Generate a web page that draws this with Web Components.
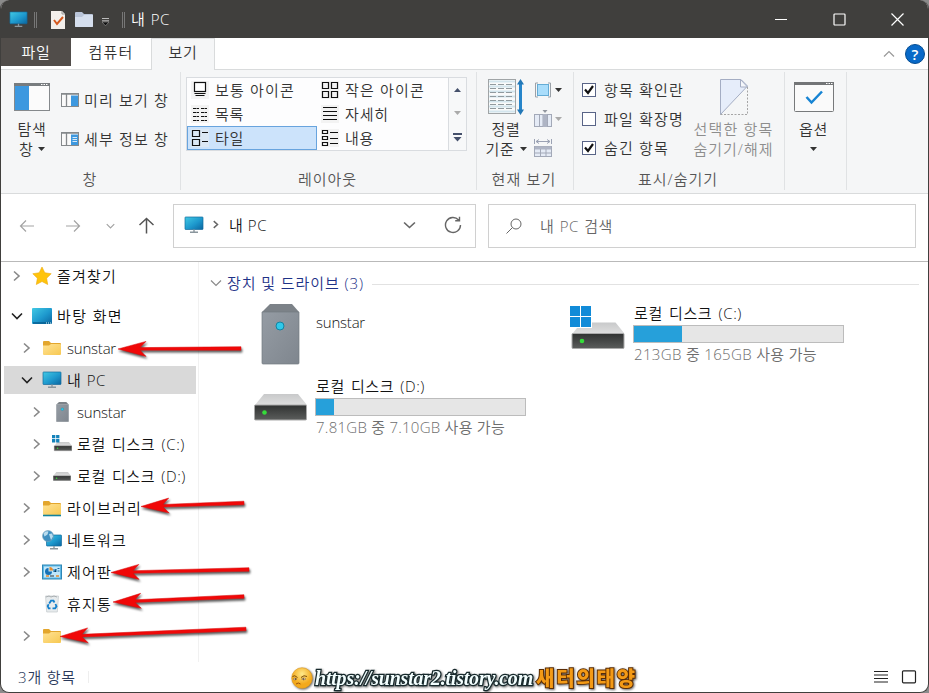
<!DOCTYPE html>
<html lang="ko">
<head>
<meta charset="utf-8">
<title>내 PC</title>
<style>
    body {
        margin: 0;
        overflow: hidden;
        background: #8b8b8b;
        font: 350 15px/20px "Open Sans", "Noto Sans CJK KR DemiLight", "Noto Sans CJK KR", sans-serif;
        color: #111;
    }
</style>
</head>
<body>
<explorer-window></explorer-window>

<script>
const monitor = (x, y, w, h) => `
    <rect x="${x}" y="${y}" width="${w}" height="${h}" rx=".6" fill="url(#m)" stroke="#126a9c" stroke-width=".7"/>
    <path d="M${x + w / 2} ${y + h}v2.5M${x + w / 2 - 4} ${y + h + 2.8}h8" stroke="#8a969d" stroke-width="1.4"/>`;

const folder = `
    <path d="M1 3q0-1 1-1h5l2 2h9q1 0 1 1v3H1z" fill="#e3a62d"/>
    <path d="M1 6.5h6l2-1.5h9q1 0 1 1v9q0 1-1 1H2q-1 0-1-1z" fill="url(#f)"/>`;

const drive = `
    <path d="M10 0h34l9 11H1z" fill="url(#dt)"/>
    <rect x=".5" y="11" width="52" height="15" rx="1" fill="url(#db)" stroke="#aaa" stroke-width="1"/>
    <circle cx="10.500" cy="18.500" r="2.300" fill="#35dc3a"/>`;

const winLogo = `<path d="M0 0h10v10H0zM11 0h10v10H11zM0 11h10v10H0zM11 11h10v10H11z" fill="#118bd8"/>`;

const tower = `
    <path d="M9 0h22l7 8H1z" fill="#7c8288"/>
    <path d="M1 8h37v51q0 1-1 1H2q-1 0-1-1z" fill="url(#t)" stroke="#747b82" stroke-width=".7"/>
    <circle cx="19" cy="22" r="4" fill="#2fc9ea" stroke="#1583a0"/>`;

// name: [viewBox width, viewBox height, markup]
const ICONS = {
    monitor: [20, 18, monitor(1, 1, 18, 12.5)],
    desktop: [20, 18, `<rect width="20" height="16" y="1" rx="1" fill="url(#m)"/><path d="M1 16h18" stroke="#075f91" stroke-width="1.500"/><path d="M14 16h1m1 0h1m1 0h1" stroke="#dff"/>`],
    folder: [20, 18, folder],
    library: [20, 18, folder + '<path d="M1 16.500h18" stroke="#12829d" stroke-width="1.600"/>'],
    star: [20, 20, '<path d="M10 1l2.800 5.800 6.400.9-4.600 4.500 1.100 6.300L10 15.500l-5.700 3 1.100-6.300L.8 7.700l6.400-.9z" fill="#ffc40c" stroke="#ecaa0c" stroke-width=".6"/>'],
    tower: [39, 61, tower],
    drive: [53, 27, drive],
    windrive: [55, 44, `<g transform="translate(1.500 16.500)">${drive}</g><path d="M0 0h22v22H0z" fill="#fff"/>${winLogo}`],
    miniwindrive: [20, 18, `<g transform="translate(2 7) scale(.34)">${drive}</g><path d="M0 0h8v7H0z" fill="#fff"/><path d="M0 0h3.300v3.300H0zM4.100 0h3.300v3.300H4.100zM0 4.100h3.300v3.300H0zM4.100 4.100h3.300v3.300H4.100z" fill="#1482ba"/>`],
    network: [20, 20, monitor(4.5, 5, 15, 11) + `<circle cx="6" cy="6" r="5.500" fill="#3f8fc0" stroke="#7ea5bb" stroke-width=".6"/><path d="M1.500 3.500q2-3 5-2l-1 3-3 2zM7 4l3-.5 1 3-2 3.500-1-3z" fill="#b9dcee"/>`],
    control: [20, 18, `<rect x=".5" y="2" width="19" height="14" fill="#5db8e6" stroke="#2f87b6"/><rect x="2" y="3.500" width="16" height="11" fill="#bfe6fa"/><path d="M6.500 5a3.500 3.500 0 1 0 3.500 3.500H6.500z" fill="#1671b6"/><path d="M7.500 4v3.500H11A3.500 3.500 0 0 0 7.500 4" fill="#e78b2d"/><path d="M12 9v-3M12 9l2-3v3M15.500 5.500h2M15.500 8h2" stroke="#176ba4"/><path d="M4 13h3m7 0h3" stroke="#e78b2d" stroke-width="1.300"/><path d="M8 13h4" stroke="#333"/>`],
    trash: [20, 20, `<path d="M3.500 2h13l-1.200 16H4.700z" fill="#e7ebed" stroke="#c3c9cc" stroke-width=".7"/><path d="M4 3l3-1 2 1 3-1 3 1" stroke="#a9afb2" fill="none"/><path d="M7.200 9.500L9 6.700h2.500l1 1.800M13.500 10l1 2.300-1.300 2h-2.700M8.500 14.300H6.700L5.700 12l1-1.700" fill="none" stroke="#1480cc" stroke-width="1.800"/>`],

    doc: [14, 18, '<path d="M0 0h11l3 3v15H0z" fill="#f3efeb"/><path d="M11 0v3h3" fill="none" stroke="#999"/><path d="M3 9l3 4 6-7" fill="none" stroke="#d65a1f" stroke-width="2"/>'],
    whitefolder: [18, 15, '<path d="M0 1q0-1 1-1h6l2 2h8q1 0 1 1v11q0 1-1 1H1q-1 0-1-1z" fill="#b9c4d8"/><path d="M0 5h7l2-2h9v11q0 1-1 1H1q-1 0-1-1z" fill="#d5deed"/>'],
    qat: [7, 8, '<path d="M0 .5h7M0 2.800h7" stroke="#bbb"/><path d="M0 4h7L3.500 7.800z" fill="#111" stroke="#aaa" stroke-width=".5"/>'],
    min: [13, 13, '<path d="M0 6.500h12" stroke="#fff" stroke-width="1.200"/>'],
    max: [13, 13, '<rect x="1" y="1" width="11" height="11" rx=".8" fill="none" stroke="#fff" stroke-width="1.200"/>'],
    close: [13, 13, '<path d="M.5.5l12 12m0-12l-12 12" stroke="#fff" stroke-width="1.200"/>'],
    help: [20, 20, '<circle cx="10" cy="10" r="9.500" fill="#0869c8" stroke="#064d91"/>'],

    right: [8, 12, '<path d="M1 1.500L6 6l-5 4.500" class="l"/>'],
    down: [12, 8, '<path d="M1 1.500L6 6.500l5-5" class="l"/>'],
    up: [12, 8, '<path d="M1 6.500L6 1.500l5 5" class="l"/>'],
    back: [16, 16, '<path d="M15 8H1.500M7 2.500L1.500 8 7 13.500" class="l"/>'],
    forward: [16, 16, '<path d="M1 8h13.500M9 2.500L14.500 8 9 13.500" class="l"/>'],
    upward: [17, 17, '<path d="M8.500 16.500V1.500M1.500 8l7-6.500 7 6.500" class="l"/>'],
    refresh: [18, 18, '<path d="M14.600 4A7.500 7.500 0 1 0 16.500 9M15.500.8v4h-4.300" class="l"/>'],
    search: [16, 16, '<circle cx="10" cy="6" r="5" class="l"/><path d="M6.500 9.500L.5 15.500" class="l"/>'],
    caret: [7, 4, '<path d="M0 0h7L3.500 4z" fill="currentColor"/>'],
    caretup: [7, 4, '<path d="M0 4h7L3.500 0z" fill="currentColor"/>'],
    more: [9, 9, '<path d="M0 1h9" stroke="currentColor" stroke-width="2"/><path d="M.5 4h8l-4 4.500z" fill="currentColor"/>'],

    navpane: [36, 28, '<rect x=".5" y=".5" width="35" height="27" fill="#fbfbfb" stroke="#85898c"/><path d="M0 1.500h36" stroke="#787c7f" stroke-width="3"/><path d="M1 3h14v24H1z" fill="#3d98df"/><path d="M27 1.500h1.500m1 0H31m1 0h1.500" stroke="#fff"/>'],
    preview: [18, 14, '<rect x=".5" y=".5" width="17" height="13" fill="#fafafa" stroke="#85898c"/><path d="M0 1h18M5.500 1v12" stroke="#85898c" fill="none" stroke-width="1.300"/><path d="M10 2.500h7V13h-7z" fill="#3d98df"/>'],
    details: [18, 14, '<rect x=".5" y=".5" width="17" height="13" fill="#fafafa" stroke="#85898c"/><path d="M0 1h18M5.500 1v12" stroke="#85898c" fill="none" stroke-width="1.300"/><path d="M10 2.500h7V13h-7z" fill="#3d98df"/><path d="M11.500 5.500h4.500m-4.500 2h4.500m-4.500 2h4.500" stroke="#fff" stroke-width=".8"/>'],

    medium: [18, 18, '<rect x="3.500" y="1.500" width="11" height="9" class="k"/><path d="M3.500 12.500h11M4.500 14.500h9" class="k"/>'],
    small: [18, 18, '<path d="M1.500 1.500h6v6h-6zM10.500 1.500h6v6h-6zM1.500 10.500h6v6h-6zM10.500 10.500h6v6h-6z" class="k"/>'],
    list: [18, 18, '<path d="M2 3.500h6m2 0h6M2 7.500h6m2 0h6M2 11.500h6m2 0h6M2 15.500h6m2 0h6" class="k" stroke-dasharray="3.500 .5 2 0"/>'],
    lines: [18, 18, '<path d="M2 2.500h14M2 6.500h14M2 10.500h14M2 14.500h14" class="k"/>'],
    tiles: [18, 18, '<path d="M1.500 1.500h7v6h-7zM1.500 10.500h7v6h-7zM11 3.500h6M11 12.500h6" class="k"/>'],
    content: [18, 18, '<path d="M1.500 1.500h5v3h-5zM1.500 7.500h5v3h-5zM1.500 13.500h5v3h-5zM9 3.500h8M9 9.500h8M9 14.500h8" class="k"/>'],

    sort: [36, 36, '<rect x=".5" y=".5" width="27" height="34" fill="#fafafa" stroke="#a0a4a6"/><path d="M1 2.500h26M1 7.500h26M1 12.500h26M1 17.500h26M1 22.500h26M1 27.500h26M1 32.500h26" stroke="#d3e5ed" stroke-width="2"/><path d="M2 5.500h24M2 9.500h24M2 13.500h24M2 17.500h24M2 21.500h24M2 25.500h24M2 29.500h24" stroke="#919a9e" stroke-dasharray="6 2"/><path d="M32.500 4v28" stroke="#2685ca" stroke-width="3"/><path d="M29 5.500L32.500 0 36 5.500zM29 30.500l3.500 5.500 3.500-5.500z" fill="#2378b7"/>'],
    group: [18, 18, '<path d="M4 2H1.500v14H4M14 2h2.500v14H14" fill="none" stroke="#9ba1a8"/><rect x="3.500" y="3.500" width="11" height="11" fill="#a9ddfb" stroke="#65acd5"/>'],
    addcol: [18, 18, '<rect x=".5" y="4.500" width="17" height="12" fill="#e5ebf6" stroke="#a3a9b8"/><path d="M5.500 4v13M9 4v13M13.500 4v13" stroke="#a3a9b8"/><path d="M9 4h4v13H9z" fill="#aeb4c4"/><path d="M8.500 0h5L11 3z" fill="#91969f"/>'],
    fitcol: [18, 19, '<path d="M.5 0v5M17.500 0v5M2 2.500h14M5 .5l-3 2 3 2M13 .5l3 2-3 2" fill="none" stroke="#9ba2b4"/><rect x=".5" y="7.500" width="17" height="10" fill="#e5ebf6" stroke="#a3a9b8"/><path d="M1 9h16" stroke="#aeb4c4" stroke-width="3"/><path d="M1 14h16M6.500 10v8M12 10v8" stroke="#a3a9b8"/>'],
    hide: [28, 36, '<path d="M.5 35.500V.5H21L27.500 7z" fill="#e6edfa" stroke="#a4adc3"/><path d="M20.500.5V8h7z" fill="#f5f7fb" stroke="#a4adc3"/><path d="M27.500 8v27.500H.5" fill="none" stroke="#a5a5a5" stroke-dasharray="2 1.500"/>'],
    options: [40, 30, '<rect x=".5" y=".5" width="39" height="29" rx="1" fill="#fafafa" stroke="#77797b"/><path d="M0 1.500h40" stroke="#737577" stroke-width="3"/><path d="M32 1.500h1.500m1 0H36m1 0h1.500" stroke="#fff"/><path d="M12.500 15l5 5.500L28 9.500" fill="none" stroke="#1784d3" stroke-width="2.500"/>'],
    tick: [14, 14, '<path d="M3 6.500L6 10l5-7" fill="none" stroke="#111" stroke-width="2.200"/>'],
    viewlist: [16, 14, '<path d="M1 1.500h14M1 5h14M1 8.500h14M1 12h14" stroke="#222" stroke-width="1.200"/>'],
    viewtile: [16, 14, '<rect x="1.500" y=".8" width="13" height="12" rx="1" fill="none" stroke="#222" stroke-width="1.200"/>'],
    face: [22, 22, '<circle cx="11" cy="11" r="10.300" fill="url(#s)" stroke="#e09a1c" stroke-width=".6"/><path d="M1.500 9.500q2-2 5 1M10 10.500q3-3 6-1" stroke="#7c4c09" fill="none"/><path d="M2 12q2-2 4 0-2 2-4 0M10.500 12q2.500-2.500 4.500 0-2.500 2-4.500 0" fill="#fff" stroke="#7c4c09" stroke-width=".5"/><circle cx="4.500" cy="12" r=".8" fill="#442806"/><circle cx="12.500" cy="12" r=".8" fill="#442806"/><path d="M5 17q2.500-2 4.500 0" stroke="#9c540e" fill="none"/>'],
};

const DEFS = `<defs>
    <linearGradient id="m" x2="1" y2="1"><stop stop-color="#42c9e4"/><stop offset=".55" stop-color="#1d98cd"/><stop offset="1" stop-color="#0b659f"/></linearGradient>
    <linearGradient id="f" x2="1" y2="1"><stop stop-color="#ffe294"/><stop offset="1" stop-color="#f7c851"/></linearGradient>
    <linearGradient id="dt" x2="0" y2="1"><stop stop-color="#c8c9ca"/><stop offset="1" stop-color="#dedede"/></linearGradient>
    <linearGradient id="db" x2="0" y2="1"><stop stop-color="#303231"/><stop offset="1" stop-color="#5b5d5c"/></linearGradient>
    <linearGradient id="t" x2="1" y2="1"><stop stop-color="#959ca4"/><stop offset="1" stop-color="#7f868e"/></linearGradient>
    <radialGradient id="s" cx=".5" cy=".3"><stop stop-color="#ffe98a"/><stop offset="1" stop-color="#f3a91b"/></radialGradient>
</defs>`;

class WinIcon extends HTMLElement {
    constructor() {
        super();
        this.attachShadow({ mode: 'open' });
    }

    connectedCallback() {
        const [w, h, body] = ICONS[this.getAttribute('name')];
        const width = this.getAttribute('w') || w;
        const height = this.getAttribute('h') || h;
        this.shadowRoot.innerHTML = `
            <style>
                :host { display: block; flex: none; width: ${width}px; height: ${height}px; }
                svg { display: block; }
                .l { fill: none; stroke: currentColor; stroke-width: var(--stroke, 1.2); }
                .k { fill: none; stroke: #111; stroke-width: 1.2; }
                rect.k { fill: #fff; }
            </style>
            <svg width="${width}" height="${height}" viewBox="0 0 ${w} ${h}" preserveAspectRatio="none">${DEFS}${body}</svg>
        `;
    }
}
customElements.define('win-icon', WinIcon);

// Text run tracked so that it fills the width given in "w".
// Runs with latin letters keep a tight tracking, the rest goes into the spaces.
class FitText extends HTMLElement {
    constructor() {
        super();
        this.attachShadow({ mode: 'open' });
        this.shadowRoot.innerHTML = `
            <style>
                :host { display: block; flex: none; white-space: nowrap; }
                span { display: inline-block; }
            </style>
            <span><slot></slot></span>
        `;
    }

    connectedCallback() {
        const text = this.textContent;
        const target = Number(this.getAttribute('w'));
        const span = this.shadowRoot.querySelector('span');
        const extra = target - span.getBoundingClientRect().width;
        const spaces = text.split(' ').length - 1;
        let tracking = extra / text.length;
        if (spaces && /[A-Z]/.test(text)) {
            tracking = Math.min(tracking, 0.6);
            span.style.wordSpacing = `${(extra - tracking * text.length) / spaces}px`;
        }
        this.style.width = `${target}px`;
        span.style.letterSpacing = `${tracking}px`;
    }
}
customElements.define('fit-text', FitText);

class TitleBar extends HTMLElement {
    constructor() {
        super();
        this.attachShadow({ mode: 'open' });
        this.shadowRoot.innerHTML = `
            <style>
                :host { display: flex; align-items: center; height: 38px; padding-left: 8px; background: #403f3d; color: #fff; }
                i { width: 1px; height: 16px; border: 1px solid #777; border-width: 0 1px; margin-top: 2px; }
                .doc { margin: 2px 10px 0 14px; }
                .qat { margin: 5px 13px 0 9px; }
                fit-text { margin-left: 6px; }
                .buttons { display: flex; gap: 45px; margin: 0 24px 0 auto; }
            </style>
            <win-icon name="monitor" w="19" h="17"></win-icon>
            <i style="margin-left: 6px"></i>
            <win-icon class="doc" name="doc"></win-icon>
            <win-icon name="whitefolder"></win-icon>
            <win-icon class="qat" name="qat"></win-icon>
            <i></i>
            <fit-text w="39">내 PC</fit-text>
            <div class="buttons">
                <win-icon name="min"></win-icon>
                <win-icon name="max"></win-icon>
                <win-icon name="close"></win-icon>
            </div>
        `;
    }
}
customElements.define('title-bar', TitleBar);

class RibbonTabs extends HTMLElement {
    constructor() {
        super();
        this.attachShadow({ mode: 'open' });
        this.shadowRoot.innerHTML = `
            <style>
                :host { display: flex; height: 32px; background: #fff; box-shadow: inset 0 -1px #d9dbdc; color: #333; }
                .tab { display: flex; justify-content: center; box-sizing: border-box; padding-top: 4px; }
                .file { width: 70px; height: 28px; background: #514d4a; color: #fff; }
                .computer { width: 80px; }
                .view { width: 64px; background: #f5f6f7; border: 1px solid #d9dbdc; border-width: 1px 1px 0; padding-top: 3px; }
                .end { display: flex; align-items: center; gap: 10px; margin: 0 3px 0 auto; color: #999; }
                .help { display: grid; place-items: center; margin-top: -1px; font-size: 15px; font-weight: 600; color: #fff; }
                .help > * { grid-area: 1 / 1; }
            </style>
            <div class="tab file"><fit-text w="29">파일</fit-text></div>
            <div class="tab computer"><fit-text w="45">컴퓨터</fit-text></div>
            <div class="tab view"><fit-text w="29">보기</fit-text></div>
            <div class="end">
                <win-icon name="up"></win-icon>
                <div class="help"><win-icon name="help"></win-icon><span>?</span></div>
            </div>
        `;
    }
}
customElements.define('ribbon-tabs', RibbonTabs);

class RibbonGroup extends HTMLElement {
    constructor() {
        super();
        this.attachShadow({ mode: 'open' });
    }

    connectedCallback() {
        this.shadowRoot.innerHTML = `
            <style>
                :host { display: flex; flex-direction: column; box-sizing: border-box; flex: none; height: 118px; margin-top: 2px; border-right: 1px solid #e0e2e4; width: ${this.getAttribute('width')}px; }
                .body { display: flex; height: 97px; }
                .label { display: flex; justify-content: center; padding-right: 2px; color: #555; }
            </style>
            <div class="body"><slot></slot></div>
            <div class="label"><fit-text w="${this.getAttribute('lw')}">${this.getAttribute('label')}</fit-text></div>
        `;
    }
}
customElements.define('ribbon-group', RibbonGroup);

class BigButton extends HTMLElement {
    constructor() {
        super();
        this.attachShadow({ mode: 'open' });
        this.shadowRoot.innerHTML = `
            <style>
                :host { display: flex; flex-direction: column; align-items: center; }
                .icon { display: flex; height: 37px; align-items: center; margin-bottom: 4px; }
                .row { display: flex; align-items: center; gap: 5px; height: 20px; }
            </style>
            <div class="icon"><slot name="icon"></slot></div>
            <div class="row"><slot name="top"></slot></div>
            <div class="row"><slot></slot></div>
        `;
    }
}
customElements.define('big-button', BigButton);

class GalleryItem extends HTMLElement {
    constructor() {
        super();
        this.attachShadow({ mode: 'open' });
        this.shadowRoot.innerHTML = `
            <style>
                :host { display: flex; align-items: center; gap: 6px; box-sizing: border-box; height: 24px; padding-left: 3px; border: 1px solid transparent; }
                :host([selected]) { background: #cce3fb; border-color: #68a4de; }
                win-icon { background: #f3f3f3; }
                :host([selected]) win-icon { background: #dbe8f4; }
                ::slotted(fit-text) { margin-top: -1px; }
            </style>
            <win-icon name="${this.getAttribute('icon')}"></win-icon>
            <slot></slot>
        `;
    }
}
customElements.define('gallery-item', GalleryItem);

class CheckItem extends HTMLElement {
    constructor() {
        super();
        this.attachShadow({ mode: 'open' });
        this.shadowRoot.innerHTML = `
            <style>
                :host { display: flex; align-items: center; gap: 8px; height: 29px; }
                .box { box-sizing: border-box; width: 14px; height: 14px; border: 1px solid #596487; background: #fff; }
                win-icon { margin: -1px; }
            </style>
            <div class="box">${this.hasAttribute('checked') ? '<win-icon name="tick"></win-icon>' : ''}</div>
            <slot></slot>
        `;
    }
}
customElements.define('check-item', CheckItem);

class RibbonPanel extends HTMLElement {
    constructor() {
        super();
        this.attachShadow({ mode: 'open' });
        this.shadowRoot.innerHTML = `
            <style>
                :host { display: flex; box-sizing: border-box; height: 124px; background: #f5f6f7; border-bottom: 1px solid #d9dbdc; color: #333; }
                .side { display: flex; align-items: center; gap: 5px; height: 39px; }
                .gallery { display: flex; box-sizing: border-box; width: 281px; height: 74px; margin: 5px 0 0 5px; border: 1px solid #d9dce0; background: #fdfdfe; }
                .items { display: grid; grid-template: repeat(3, 24px) / 130px 131px; height: 72px; }
                .scroll { display: flex; flex-direction: column; align-items: center; justify-content: space-between; box-sizing: border-box; flex: 1; padding: 10px 0 8px; border-left: 1px solid #d9dce0; background: #f7f8f9; color: #45506b; }
                .small { display: flex; flex-direction: column; gap: 11px; margin: 9px 0 0 8px; }
                .small div { display: flex; align-items: center; gap: 3px; height: 18px; }
                .gray { color: #8d8d8d; }
                .dim { color: #aaa; }
            </style>
            <ribbon-group width="180" label="창" lw="14">
                <big-button style="margin: 6px 0 0 12px; width: 38px">
                    <win-icon slot="icon" name="navpane"></win-icon>
                    <fit-text slot="top" w="29">탐색</fit-text>
                    <fit-text w="14">창</fit-text><win-icon name="caret"></win-icon>
                </big-button>
                <div style="margin: 8px 0 0 10px">
                    <div class="side"><win-icon name="preview"></win-icon><fit-text w="85">미리 보기 창</fit-text></div>
                    <div class="side"><win-icon name="details"></win-icon><fit-text w="85">세부 정보 창</fit-text></div>
                </div>
            </ribbon-group>
            <ribbon-group width="296" label="레이아웃" lw="59">
                <div class="gallery">
                    <div class="items">
                        <gallery-item icon="medium"><fit-text w="80">보통 아이콘</fit-text></gallery-item>
                        <gallery-item icon="small"><fit-text w="80">작은 아이콘</fit-text></gallery-item>
                        <gallery-item icon="list"><fit-text w="29">목록</fit-text></gallery-item>
                        <gallery-item icon="lines"><fit-text w="44">자세히</fit-text></gallery-item>
                        <gallery-item icon="tiles" selected><fit-text w="29">타일</fit-text></gallery-item>
                        <gallery-item icon="content"><fit-text w="29">내용</fit-text></gallery-item>
                    </div>
                    <div class="scroll">
                        <win-icon name="caretup"></win-icon>
                        <win-icon class="dim" name="caret"></win-icon>
                        <win-icon name="more"></win-icon>
                    </div>
                </div>
            </ribbon-group>
            <ribbon-group width="97" label="현재 보기" lw="65">
                <big-button style="margin: 6px 0 0 9px; width: 40px">
                    <win-icon slot="icon" name="sort"></win-icon>
                    <fit-text slot="top" w="29">정렬</fit-text>
                    <fit-text w="29">기준</fit-text><win-icon name="caret"></win-icon>
                </big-button>
                <div class="small">
                    <div><win-icon name="group"></win-icon><win-icon name="caret"></win-icon></div>
                    <div class="dim"><win-icon name="addcol"></win-icon><win-icon name="caret"></win-icon></div>
                    <div><win-icon name="fitcol"></win-icon></div>
                </div>
            </ribbon-group>
            <ribbon-group width="211" label="표시/숨기기" lw="80">
                <div style="margin: 3px 0 0 8px; width: 110px">
                    <check-item checked><fit-text w="80">항목 확인란</fit-text></check-item>
                    <check-item><fit-text w="80">파일 확장명</fit-text></check-item>
                    <check-item checked><fit-text w="65">숨긴 항목</fit-text></check-item>
                </div>
                <big-button class="gray" style="margin: 6px 0 0 1px; width: 81px">
                    <win-icon slot="icon" name="hide"></win-icon>
                    <fit-text slot="top" w="80">선택한 항목</fit-text>
                    <fit-text w="80">숨기기/해제</fit-text>
                </big-button>
            </ribbon-group>
            <ribbon-group width="62" label="" lw="0">
                <big-button style="margin: 6px 0 0 8px; width: 41px">
                    <win-icon slot="icon" name="options"></win-icon>
                    <fit-text slot="top" w="29">옵션</fit-text>
                    <win-icon name="caret"></win-icon>
                </big-button>
            </ribbon-group>
        `;
    }
}
customElements.define('ribbon-panel', RibbonPanel);

class AddressBar extends HTMLElement {
    constructor() {
        super();
        this.attachShadow({ mode: 'open' });
        this.shadowRoot.innerHTML = `
            <style>
                :host { display: flex; align-items: center; box-sizing: border-box; height: 68px; padding: 0 12px 4px 18px; border-bottom: 1px solid #b9b9b9; }
                .off { color: #a3a3a3; }
                .box { display: flex; align-items: center; box-sizing: border-box; height: 44px; border: 1px solid #d0d0d0; color: #666; }
                .address { width: 303px; margin: 0 12px 0 18px; padding: 0 13px 2px 10px; }
                .address fit-text { color: #111; margin-left: 10px; }
                .search { flex: 1; padding-left: 17px; gap: 18px; }
            </style>
            <win-icon class="off" name="back"></win-icon>
            <win-icon class="off" name="forward" style="margin-left: 30px"></win-icon>
            <win-icon class="off" name="down" w="9" h="6" style="margin-left: 25px; --stroke: 1.600"></win-icon>
            <win-icon name="upward" style="margin-left: 23px; color: #555; --stroke: 1.500"></win-icon>
            <div class="box address">
                <win-icon name="monitor"></win-icon>
                <win-icon name="right" w="6" h="9" style="margin-left: 9px; --stroke: 2"></win-icon>
                <fit-text w="38">내 PC</fit-text>
                <win-icon name="down" w="13" style="margin-left: auto; --stroke: 1.500"></win-icon>
                <win-icon name="refresh" style="margin-left: 28px; --stroke: 1.400"></win-icon>
            </div>
            <div class="box search">
                <win-icon name="search" style="--stroke: 1"></win-icon>
                <fit-text w="73">내 PC 검색</fit-text>
            </div>
        `;
    }
}
customElements.define('address-bar', AddressBar);

class TreeItem extends HTMLElement {
    constructor() {
        super();
        this.attachShadow({ mode: 'open' });
    }

    connectedCallback() {
        const level = Number(this.getAttribute('level'));
        const state = this.getAttribute('state');
        this.shadowRoot.innerHTML = `
            <style>
                :host { display: flex; align-items: center; box-sizing: border-box; flex: none; height: 28px; padding-left: ${level * 10 + 7}px; }
                :host([selected]) { background: #d9d9d9; }
                .chevron { display: flex; justify-content: center; width: 12px; color: #888; --stroke: 1.6; }
                .open { color: #222; }
                .icon { display: flex; justify-content: center; width: 20px; margin: 0 5px 0 9px; }
            </style>
            <div class="chevron ${state === 'down' ? 'open' : ''}">${state ? `<win-icon name="${state}"></win-icon>` : ''}</div>
            <div class="icon"><slot name="icon"></slot></div>
            <slot></slot>
        `;
    }
}
customElements.define('tree-item', TreeItem);

class NavTree extends HTMLElement {
    constructor() {
        super();
        this.attachShadow({ mode: 'open' });
        this.shadowRoot.innerHTML = `
            <style>
                :host { display: flex; flex-direction: column; gap: 4px; flex: none; box-sizing: border-box; width: 198px; height: 400px; padding: 0 2px 0 3px; border-right: 1px solid #f1f1f1; }
            </style>
            <tree-item level="0" state="right" style="margin-bottom: 8px"><win-icon slot="icon" name="star"></win-icon><fit-text w="60">즐겨찾기</fit-text></tree-item>
            <tree-item level="0" state="down"><win-icon slot="icon" name="desktop"></win-icon><fit-text w="66">바탕 화면</fit-text></tree-item>
            <tree-item level="1" state="right"><win-icon slot="icon" name="folder"></win-icon><fit-text w="49">sunstar</fit-text></tree-item>
            <tree-item level="1" state="down" selected><win-icon slot="icon" name="monitor"></win-icon><fit-text w="39">내 PC</fit-text></tree-item>
            <tree-item level="2" state="right"><win-icon slot="icon" name="tower" w="13" h="20"></win-icon><fit-text w="49">sunstar</fit-text></tree-item>
            <tree-item level="2" state="right"><win-icon slot="icon" name="miniwindrive"></win-icon><fit-text w="108">로컬 디스크 (C:)</fit-text></tree-item>
            <tree-item level="2" state="right"><win-icon slot="icon" name="drive" w="18" h="9"></win-icon><fit-text w="109">로컬 디스크 (D:)</fit-text></tree-item>
            <tree-item level="1" state="right"><win-icon slot="icon" name="library"></win-icon><fit-text w="75">라이브러리</fit-text></tree-item>
            <tree-item level="1" state="right"><win-icon slot="icon" name="network"></win-icon><fit-text w="60">네트워크</fit-text></tree-item>
            <tree-item level="1" state="right"><win-icon slot="icon" name="control"></win-icon><fit-text w="45">제어판</fit-text></tree-item>
            <tree-item level="1"><win-icon slot="icon" name="trash"></win-icon><fit-text w="45">휴지통</fit-text></tree-item>
            <tree-item level="1" state="right"><win-icon slot="icon" name="folder"></win-icon></tree-item>
        `;
    }
}
customElements.define('nav-tree', NavTree);

class DriveTile extends HTMLElement {
    constructor() {
        super();
        this.attachShadow({ mode: 'open' });
    }

    connectedCallback() {
        const used = this.getAttribute('used');
        this.shadowRoot.innerHTML = `
            <style>
                :host { display: flex; height: 73px; }
                .icon { display: flex; align-items: center; justify-content: flex-end; width: 55px; height: 61px; margin: 5px 8px 0 0; }
                .text { width: 211px; padding-top: 4px; }
                .bar { box-sizing: border-box; height: 18px; margin: 2px 0 1px; border: 1px solid #bcbcbc; background: #e6e6e6; }
                .fill { height: 100%; width: ${used}px; background: #26a0da; }
                .plain { padding-top: 13px; }
                ::slotted([slot="note"]) { color: #6d6d6d; margin-left: 1px; }
            </style>
            <div class="icon"><slot name="icon"></slot></div>
            <div class="text ${used ? '' : 'plain'}">
                <slot></slot>
                ${used ? '<div class="bar"><div class="fill"></div></div>' : ''}
                <slot name="note"></slot>
            </div>
        `;
    }
}
customElements.define('drive-tile', DriveTile);

class DriveList extends HTMLElement {
    constructor() {
        super();
        this.attachShadow({ mode: 'open' });
        this.shadowRoot.innerHTML = `
            <style>
                :host { display: block; flex: 1; }
                header { display: flex; align-items: center; height: 36px; padding: 3px 9px 0 11px; box-sizing: border-box; margin-top: 1px; color: #1e3287; }
                header win-icon { color: #8a8a8a; margin-right: 5px; }
                hr { flex: 1; margin: 3px 0 0 8px; border: 0; border-top: 1px solid #e2e2e2; }
                .tiles { display: grid; grid-template-columns: 318px 318px; padding-left: 53px; }
            </style>
            <header><win-icon name="down"></win-icon><fit-text w="137">장치 및 드라이브 (3)</fit-text><hr></header>
            <div class="tiles">
                <drive-tile><win-icon slot="icon" name="tower" style="margin-right: 7px"></win-icon><fit-text w="49" style="margin-left: 1px">sunstar</fit-text></drive-tile>
                <drive-tile used="48">
                    <win-icon slot="icon" name="windrive" style="margin-top: -13px"></win-icon>
                    <fit-text w="108" style="margin-left: 1px">로컬 디스크 (C:)</fit-text>
                    <fit-text slot="note" w="183">213GB 중 165GB 사용 가능</fit-text>
                </drive-tile>
                <drive-tile used="18">
                    <win-icon slot="icon" name="drive"></win-icon>
                    <fit-text w="109" style="margin-left: 1px">로컬 디스크 (D:)</fit-text>
                    <fit-text slot="note" w="189">7.81GB 중 7.10GB 사용 가능</fit-text>
                </drive-tile>
            </div>
        `;
    }
}
customElements.define('drive-list', DriveList);

class StatusBar extends HTMLElement {
    constructor() {
        super();
        this.attachShadow({ mode: 'open' });
        this.shadowRoot.innerHTML = `
            <style>
                :host { display: flex; align-items: center; height: 30px; padding: 0 11px 0 17px; color: #2b3a5b; }
                i { width: 1px; height: 12px; margin-left: 12px; background: #eee; }
                .views { display: flex; gap: 12px; margin-left: auto; }
            </style>
            <fit-text w="58">3개 항목</fit-text><i></i>
            <div class="views"><win-icon name="viewlist"></win-icon><win-icon name="viewtile"></win-icon></div>
        `;
    }
}
customElements.define('status-bar', StatusBar);

// Red pointers drawn over the tree: tip x, tip y, tail x, tail y
const POINTERS = [
    [118, 349, 241, 348.5],
    [141, 506.5, 244, 503],
    [111, 572.5, 249, 569.5],
    [113, 602, 244, 596.5],
    [60, 636.5, 246, 629],
];

class RedPointers extends HTMLElement {
    constructor() {
        super();
        this.attachShadow({ mode: 'open' });
        const arrows = POINTERS.map(([x, y, tx, ty]) => {
            const len = Math.hypot(tx - x, ty - y);
            const angle = Math.atan2(ty - y, tx - x) * 180 / Math.PI;
            return `<path transform="translate(${x} ${y}) rotate(${angle})" d="M0 0L28-7.500 22-1.300 ${len}-1.800V1.800L22 1.300 28 7.500z"/>`;
        }).join('');
        this.shadowRoot.innerHTML = `
            <style>
                :host { position: absolute; inset: 0; pointer-events: none; }
                svg { display: block; filter: drop-shadow(1.5px 2.5px 1px rgba(0, 0, 0, .65)); }
            </style>
            <svg width="929" height="693" fill="#f00808" stroke="#d90b0b" stroke-width=".5">${arrows}</svg>
        `;
    }
}
customElements.define('red-pointers', RedPointers);

class SiteMark extends HTMLElement {
    constructor() {
        super();
        this.attachShadow({ mode: 'open' });
        this.shadowRoot.innerHTML = `
            <style>
                :host { position: absolute; left: 291px; top: 666px; display: flex; align-items: center; height: 24px; line-height: 24px; filter: drop-shadow(1px 1px 1px rgba(0, 0, 0, .6)); }
                .url { margin-left: 2px; font-family: "Liberation Serif", serif; font-style: italic; font-weight: bold; font-size: 20px; color: #f4ffff; -webkit-text-stroke: 2.5px #17292c; paint-order: stroke fill; }
                .name { margin-left: 3px; font-family: "Noto Sans CJK KR", sans-serif; font-weight: 900; font-size: 20px; color: #f39a16; -webkit-text-stroke: 2px #5a2c05; paint-order: stroke fill; }
            </style>
            <win-icon name="face"></win-icon>
            <fit-text class="url" w="218">https://sunstar2.tistory.com</fit-text>
            <fit-text class="name" w="101">새터의태양</fit-text>
        `;
    }
}
customElements.define('site-mark', SiteMark);

class ExplorerWindow extends HTMLElement {
    constructor() {
        super();
        this.attachShadow({ mode: 'open' });
        this.shadowRoot.innerHTML = `
            <style>
                :host { display: block; position: relative; width: 929px; height: 693px; }
                .window { box-sizing: border-box; width: 929px; height: 693px; overflow: hidden; border: 1px solid #403f3d; border-top: 0; border-radius: 9px; background: #fff; }
                .main { display: flex; height: 400px; }
            </style>
            <div class="window">
                <title-bar></title-bar>
                <ribbon-tabs></ribbon-tabs>
                <ribbon-panel></ribbon-panel>
                <address-bar></address-bar>
                <div class="main"><nav-tree></nav-tree><drive-list></drive-list></div>
                <status-bar></status-bar>
            </div>
            <red-pointers></red-pointers>
            <site-mark></site-mark>
        `;
    }
}
customElements.define('explorer-window', ExplorerWindow);
</script>
</body>
</html>
